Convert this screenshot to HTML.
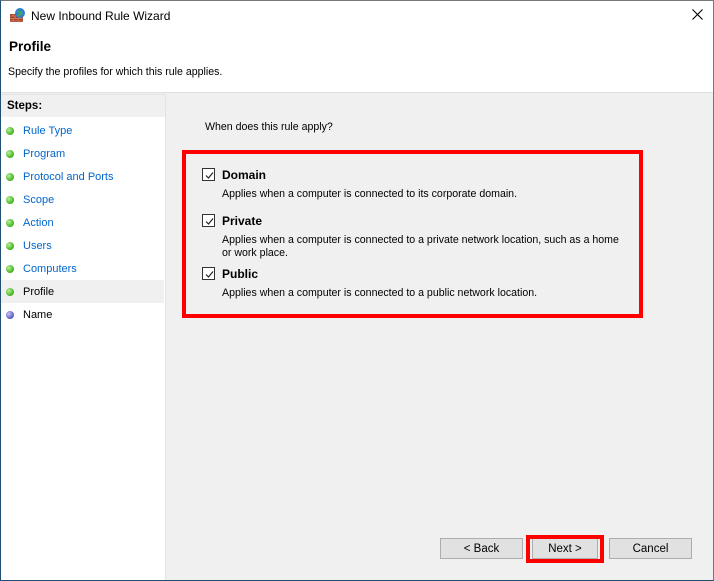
<!DOCTYPE html>
<html><head><style>
*{margin:0;padding:0;box-sizing:border-box}
body{width:714px;height:581px;position:relative;background:#f0f0f0;font-family:"Liberation Sans",Arial,sans-serif;font-size:11.5px;color:#000;overflow:hidden}
.abs{position:absolute}
#frame{position:absolute;left:0;top:0;width:714px;height:581px;border:1px solid #777;border-left-color:#1f4f73;border-bottom-color:#1f4f73}
.step{position:absolute;left:23px;color:#0066cc;font-size:11px}
.dot{position:absolute;left:6px;width:8px;height:8px;border-radius:50%;background:radial-gradient(circle at 35% 35%,#b5f09a,#3fb21a 70%)}
.cb{position:absolute;left:202px;width:13px;height:13px;border:1px solid #333;background:#fff}
.cb svg{position:absolute;left:1px;top:1px}
.lbl{position:absolute;left:222px;font-weight:bold;font-size:12px}
.desc{position:absolute;left:222px;font-size:10.6px;line-height:13px}
.btn{position:absolute;top:538px;height:21px;background:#e1e1e1;border:1px solid #adadad;text-align:center;line-height:21px;font-size:11.5px}
</style></head><body>
<div class="abs" style="left:0;top:0;width:714px;height:93px;background:#fff"></div>
<svg class="abs" style="left:9px;top:7px" width="18" height="16" viewBox="0 0 18 16">
<rect x="1" y="7" width="13" height="8" fill="#a0402a"/>
<path d="M1 9h13M1 11.5h13M1 14h13M4 7v2M9 7v2M6 9v2.5M11 9v2.5M4 11.5v2.5M9 11.5v2.5" stroke="#d98a6a" stroke-width=".7"/>
<circle cx="11" cy="6" r="5" fill="#2f7fd1"/><path d="M8 4c2 0 3 2 5 1M9 9c1-2 3-1 4-3" stroke="#4caf3a" stroke-width="1.5" fill="none"/>
</svg>
<div class="abs" style="left:31px;top:9px;font-size:12px">New Inbound Rule Wizard</div>
<svg class="abs" style="left:692px;top:9px" width="11" height="11"><path d="M0.5 0.5L10.5 10.5M10.5 0.5L0.5 10.5" stroke="#000" stroke-width="1.1"/></svg>
<div class="abs" style="left:9px;top:39px;font-size:13.5px;font-weight:bold">Profile</div>
<div class="abs" style="left:8px;top:66px;font-size:10.6px">Specify the profiles for which this rule applies.</div>
<div class="abs" style="left:0;top:92px;width:714px;height:1px;background:#e0e0e0"></div>
<div class="abs" style="left:0;top:94px;width:166px;height:487px;background:#fff;border-right:1px solid #e3e3e3"></div>
<div class="abs" style="left:0;top:94px;width:165px;height:23px;background:#f0f0f0;border-top:1px solid #e3e3e3"></div>
<div class="abs" style="left:7px;top:100px;font-weight:bold;font-size:11.5px">Steps:</div>
<div class="abs" style="left:0;top:280px;width:164px;height:23px;background:#f0f0f0"></div>
<div class="dot" style="top:127px"></div><div class="step" style="top:125px">Rule Type</div>
<div class="dot" style="top:150px"></div><div class="step" style="top:148px">Program</div>
<div class="dot" style="top:173px"></div><div class="step" style="top:171px">Protocol and Ports</div>
<div class="dot" style="top:196px"></div><div class="step" style="top:194px">Scope</div>
<div class="dot" style="top:219px"></div><div class="step" style="top:217px">Action</div>
<div class="dot" style="top:242px"></div><div class="step" style="top:240px">Users</div>
<div class="dot" style="top:265px"></div><div class="step" style="top:263px">Computers</div>
<div class="dot" style="top:288px"></div><div class="step" style="top:286px;color:#000">Profile</div>
<div class="dot" style="top:311px;background:radial-gradient(circle at 35% 35%,#c8c8f5,#5555c0 70%)"></div><div class="step" style="top:309px;color:#000">Name</div>
<div class="abs" style="left:205px;top:121px;font-size:10.6px">When does this rule apply?</div>
<div class="abs" style="left:182px;top:150px;width:461px;height:168px;border:4px solid #f00"></div>
<div class="cb" style="top:168px"><svg width="11" height="11"><path d="M2 5.5L4.5 8L9 2.5" stroke="#222" stroke-width="1.2" fill="none"/></svg></div>
<div class="lbl" style="top:168px">Domain</div>
<div class="desc" style="top:188px">Applies when a computer is connected to its corporate domain.</div>
<div class="cb" style="top:214px"><svg width="11" height="11"><path d="M2 5.5L4.5 8L9 2.5" stroke="#222" stroke-width="1.2" fill="none"/></svg></div>
<div class="lbl" style="top:214px">Private</div>
<div class="desc" style="top:234px">Applies when a computer is connected to a private network location, such as a home<br>or work place.</div>
<div class="cb" style="top:267px"><svg width="11" height="11"><path d="M2 5.5L4.5 8L9 2.5" stroke="#222" stroke-width="1.2" fill="none"/></svg></div>
<div class="lbl" style="top:267px">Public</div>
<div class="desc" style="top:287px">Applies when a computer is connected to a public network location.</div>
<div class="btn" style="left:440px;width:83px">&lt; Back</div>
<div class="btn" style="left:532px;width:66px">Next &gt;</div>
<div class="abs" style="left:526px;top:535px;width:78px;height:28px;border:4px solid #f00"></div>
<div class="btn" style="left:609px;width:83px">Cancel</div>
<div id="frame"></div>
</body></html>
